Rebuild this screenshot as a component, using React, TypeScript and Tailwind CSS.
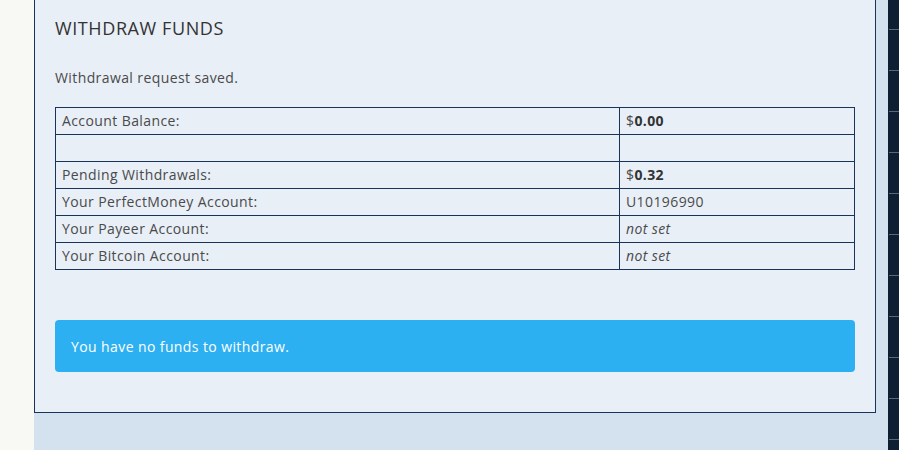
const rows: { label: string; value: React.ReactNode }[] = [
  { label: 'Account Balance:', value: <>$<b className="font-bold text-[#333]">0.00</b></> },
  { label: '', value: '' },
  { label: 'Pending Withdrawals:', value: <>$<b className="font-bold text-[#333]">0.32</b></> },
  { label: 'Your PerfectMoney Account:', value: 'U10196990' },
  { label: 'Your Payeer Account:', value: <i>not set</i> },
  { label: 'Your Bitcoin Account:', value: <i>not set</i> },
];

export default function App() {
  return (
    <div
      className="flex h-[450px] w-full overflow-hidden bg-[#d4e1ee] tracking-[0.4px] text-[#4a4a4a]"
      style={{ fontFamily: '"Open Sans", "Liberation Sans", sans-serif' }}
    >
      {/* left strip */}
      <div className="w-[34px] shrink-0 bg-[#f8f8f5]" />

      {/* main */}
      <div className="w-[842px] shrink-0">
        <div className="border-x border-b border-[#1a3358] bg-[#e8eff7] px-[20px] pt-[16px] pb-[40px]">
          <h2 className="text-[18px] leading-[24px] font-medium tracking-[0.6px] text-[#333]">WITHDRAW FUNDS</h2>
          <p className="mt-[28px] text-[14px] leading-[20px]">Withdrawal request saved.</p>

          <table className="mt-[19px] w-[800px] border-collapse text-[14px]">
            <tbody>
              {rows.map((r, i) => (
                <tr key={i}>
                  <td className="h-[27px] w-[564px] border border-[#1a3358] px-[6px] py-0 leading-[20px]">{r.label}</td>
                  <td className="h-[27px] border border-[#1a3358] px-[6px] py-0 leading-[20px]">{r.value}</td>
                </tr>
              ))}
            </tbody>
          </table>

          <div className="mt-[50px] flex h-[52px] items-center rounded-[4px] bg-[#2cb0f2] px-[16px] text-[14px] text-white">
            You have no funds to withdraw.
          </div>
        </div>
      </div>

      {/* gap */}
      <div className="w-[12px] shrink-0" />

      {/* right sidebar */}
      <div className="flex-1 bg-[#0e1f33] pt-[29px] pl-[1px]">
        {Array.from({ length: 11 }).map((_, i) => (
          <div key={i} className="mb-[40px] h-px bg-[#5d6673]" />
        ))}
      </div>
    </div>
  );
}
